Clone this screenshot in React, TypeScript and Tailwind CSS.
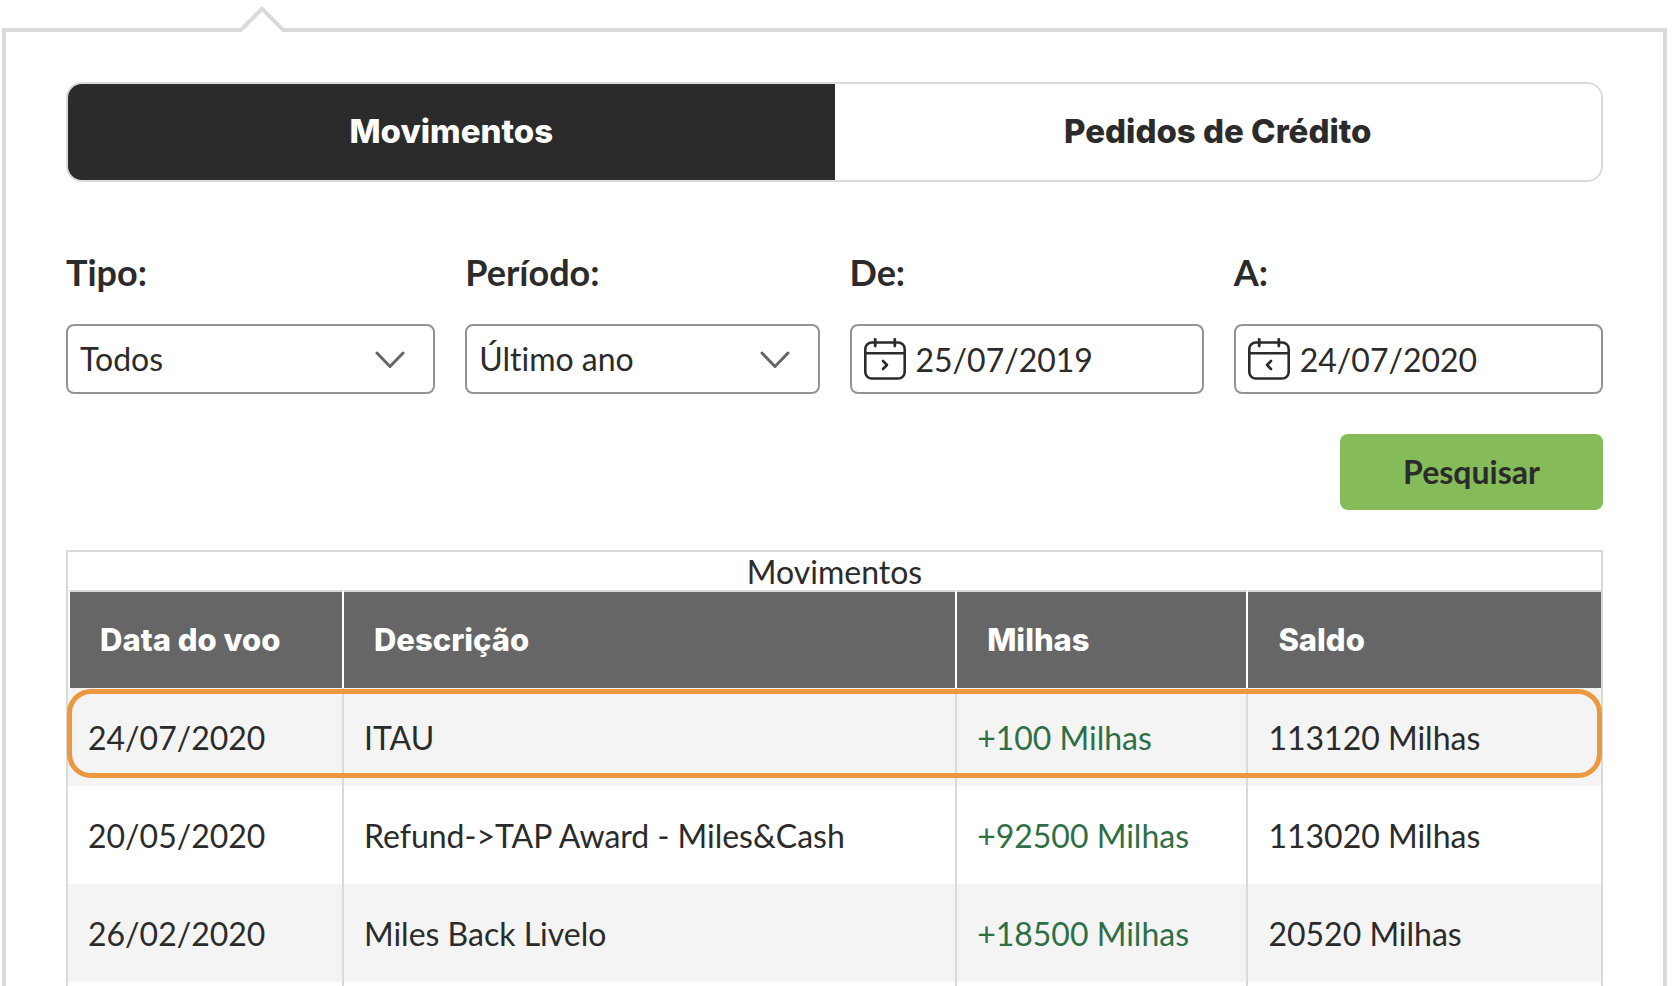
import { useState } from 'react';
import type { ReactNode } from 'react';
import clsx from 'clsx';

const movements = [
  { date: '24/07/2020', description: 'ITAU', miles: '+100 Milhas', balance: '113120 Milhas', highlighted: true },
  { date: '20/05/2020', description: 'Refund->TAP Award - Miles&Cash', miles: '+92500 Milhas', balance: '113020 Milhas' },
  { date: '26/02/2020', description: 'Miles Back Livelo', miles: '+18500 Milhas', balance: '20520 Milhas' },
];

const tabs = ['Movimentos', 'Pedidos de Crédito'];

function Notch() {
  return (
    <svg className="absolute -top-7 left-[232px]" width="48" height="28" viewBox="0 0 48 28" aria-hidden="true">
      <path d="M0.8 28 L24 4.8 L47.2 28 Z" fill="#fff" />
      <path d="M-1.2 30 L24 4.8 L49.2 30" fill="none" stroke="#dadada" strokeWidth="4" />
    </svg>
  );
}

function Chevron() {
  return (
    <svg className="pointer-events-none absolute right-[30px] top-[26px]" width="30" height="20" viewBox="0 0 30 20" fill="none" stroke="#666" strokeWidth="3" strokeLinecap="round" strokeLinejoin="round" aria-hidden="true">
      <path d="M2 3 L15 16.5 L28 3" />
    </svg>
  );
}

function CalendarIcon({ direction }: { direction: 'next' | 'previous' }) {
  return (
    <svg className="shrink-0" width="42" height="42" viewBox="0 0 42 42" fill="none" stroke="#2b2b2b" strokeWidth="2.6" strokeLinecap="round" strokeLinejoin="round" aria-hidden="true">
      <rect x="1.3" y="4.5" width="39.4" height="36" rx="6.5" />
      <path d="M1.3 15.3 H40.7" strokeWidth="2.4" />
      <path d="M11.2 1.4 V8 M30.8 1.4 V8" strokeWidth="2.8" />
      <path d={direction === 'next' ? 'M19 23 L23 27 L19 31' : 'M23 23 L19 27 L23 31'} />
    </svg>
  );
}

function Field({ id, label, children }: { id: string; label: string; children: ReactNode }) {
  return (
    <div className="min-w-0">
      <label htmlFor={id} className="mb-[30px] block text-[36px] leading-[44px] font-bold">
        {label}
      </label>
      {children}
    </div>
  );
}

function SelectField({ id, label, options }: { id: string; label: string; options: string[] }) {
  return (
    <Field id={id} label={label}>
      <div className="relative">
        <select id={id} className="block h-[70px] w-full appearance-none rounded-lg border-2 border-[#939393] bg-white px-3 text-[32px]">
          {options.map((option) => (
            <option key={option}>{option}</option>
          ))}
        </select>
        <Chevron />
      </div>
    </Field>
  );
}

function DateField({ id, label, value, direction }: { id: string; label: string; value: string; direction: 'next' | 'previous' }) {
  return (
    <Field id={id} label={label}>
      <div className="flex h-[70px] items-center gap-2.5 rounded-lg border-2 border-[#939393] px-3">
        <CalendarIcon direction={direction} />
        <input id={id} type="text" defaultValue={value} className="w-full min-w-0 bg-transparent pt-0.5 text-[32px] leading-10 outline-none" />
      </div>
    </Field>
  );
}

export default function App() {
  const [activeTab, setActiveTab] = useState(tabs[0]);

  return (
    <main className="flex min-h-screen flex-col bg-white pt-7 pr-[5px] pl-0.5 font-[Lato,sans-serif] text-[#2b2b2b] [font-variant-ligatures:no-common-ligatures]">
      <section className="relative flex grow flex-col border-4 border-b-0 border-[#dadada] px-[60px] pt-[50px]">
        <div className="absolute inset-x-0 top-0">
          <Notch />
        </div>

        <div role="tablist" className="flex h-[100px] overflow-hidden rounded-2xl border-2 border-[#dadada] font-[Inter,sans-serif]">
          {tabs.map((tab) => (
            <button
              key={tab}
              type="button"
              role="tab"
              aria-selected={tab === activeTab}
              onClick={() => setActiveTab(tab)}
              className={clsx('flex-1 pb-0.5 text-[33px] leading-10 font-extrabold', tab === activeTab ? 'bg-[#2b2b2b] text-white' : 'bg-white')}
            >
              {tab}
            </button>
          ))}
        </div>

        <form onSubmit={(event) => event.preventDefault()}>
          <div className="mt-[68px] grid grid-cols-[369fr_354fr_354fr_369fr] gap-[30px]">
            <SelectField id="type" label="Tipo:" options={['Todos']} />
            <SelectField id="period" label="Período:" options={['Último ano']} />
            <DateField id="from" label="De:" value="25/07/2019" direction="next" />
            <DateField id="to" label="A:" value="24/07/2020" direction="previous" />
          </div>
          <div className="mt-10 flex justify-end">
            <button type="submit" className="h-[76px] w-[263px] rounded-lg bg-[#85bb59] text-[32px] leading-10 font-bold">
              Pesquisar
            </button>
          </div>
        </form>

        <div className="mt-10 grow border-2 border-b-0 border-[#dadada]">
          <table className="w-full table-fixed border-separate border-spacing-0 text-left text-[32px] leading-[36px]">
            <caption className="pt-0.5">Movimentos</caption>
            <colgroup>
              <col className="w-[18%]" />
              <col className="w-[40%]" />
              <col className="w-[19%]" />
              <col />
            </colgroup>
            <thead className="font-[Inter,sans-serif] text-white">
              <tr>
                {['Data do voo', 'Descrição', 'Milhas', 'Saldo'].map((heading) => (
                  <th
                    key={heading}
                    scope="col"
                    className="h-[98px] border-t-2 border-r-2 border-t-[#dadada] border-r-white bg-[#666] bg-clip-padding pl-[30px] text-[31px] font-extrabold first:border-l-2 first:border-l-white last:border-r-0"
                  >
                    {heading}
                  </th>
                ))}
              </tr>
            </thead>
            <tbody>
              {movements.map((movement) => (
                <tr
                  key={movement.date}
                  className="relative odd:bg-[#f4f4f4] *:h-[98px] *:border-r-2 *:border-[#dadada] *:pt-0.5 *:pl-5 *:last:border-r-0"
                >
                  <td>
                    {movement.date}
                    {movement.highlighted && (
                      <span className="pointer-events-none absolute -inset-x-px top-px bottom-2 rounded-[24px] border-[5px] border-[#ec983e]" />
                    )}
                  </td>
                  <td>{movement.description}</td>
                  <td className="text-[#2f6f46]">{movement.miles}</td>
                  <td>{movement.balance}</td>
                </tr>
              ))}
            </tbody>
            <tfoot aria-hidden="true">
              <tr className="*:h-1 *:border-r-2 *:border-[#dadada] *:last:border-r-0">
                <td />
                <td />
                <td />
                <td />
              </tr>
            </tfoot>
          </table>
        </div>
      </section>
    </main>
  );
}
